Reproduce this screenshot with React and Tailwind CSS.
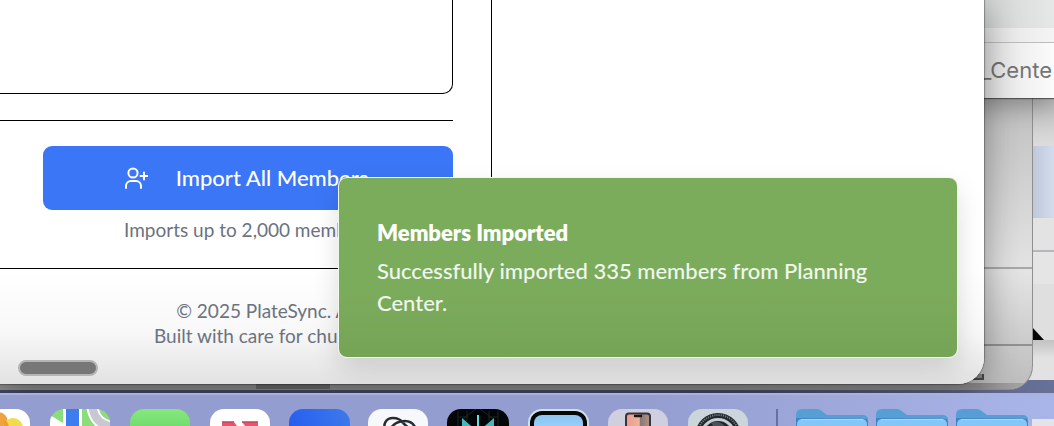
import React from "react";

const lato = "font-['Lato','Noto_Sans',sans-serif]";

function UserPlus() {
  return (
    <svg className="h-6 w-6 shrink-0" viewBox="0 0 24 24" fill="none" stroke="currentColor" strokeWidth="2" strokeLinecap="round" strokeLinejoin="round" aria-hidden="true">
      <path d="M17 22v-2a5 5 0 0 0-5-5H7a5 5 0 0 0-5 5v2" />
      <circle cx="9" cy="7" r="4.6" />
      <path d="M20 6.500v7M16.500 10h7" />
    </svg>
  );
}

function Toast() {
  return (
    <div role="status" className="absolute right-[26px] bottom-[26px] flex w-[620px] flex-col rounded-[9px] border border-[#f2f7ee] bg-linear-to-b from-[#7bac5b] from-60% to-[#76a457] px-[38px] pt-[39px] pb-[38px] text-white shadow-[0_12px_26px_rgba(0,0,0,0.13)]">
      <h2 className="text-[22px] leading-8 font-extrabold">Members Imported</h2>
      <p className="mt-[6px] text-[22px] leading-8 font-medium text-white/90">
        Successfully imported 335 members from Planning Center.
      </p>
    </div>
  );
}

function BrowserWindow() {
  return (
    <section className="absolute top-0 right-[70px] bottom-[42px] left-0 flex flex-col overflow-hidden rounded-br-[26px] bg-white shadow-[0_0_1px_1px_rgba(0,0,0,0.3),0_8px_36px_rgba(0,0,0,0.38)]">
      <main className="flex h-[269px] shrink-0">
        <div className="w-[492px] shrink-0 border-r border-b border-black pr-[38px]">
          <div className="h-[94px] rounded-br-[10px] border-r border-b border-black" />
          <hr className="mt-[26px] border-t border-black" />
          <div className="mt-[25px] pl-[43px]">
            <button type="button" className="flex h-16 w-full items-center justify-center gap-7 rounded-[9px] bg-[#3b76f6] pr-1 text-[22px] font-medium text-white">
              <UserPlus />
              <span className="pb-[2px]">Import All Members</span>
            </button>
            <p className="mt-2 text-center text-[19px] leading-6 text-[#6b7280]">Imports up to 2,000 members</p>
          </div>
        </div>
        <div className="flex-1" />
      </main>
      <footer className="flex flex-1 flex-col justify-between bg-linear-to-b from-white via-[#f8f8f8] via-55% to-[#e2e2e2]">
        <div className="ml-[154px] w-fit pt-[29px] text-center text-[19px] leading-[25px] text-[#6b7280]">
          <p>© 2025 PlateSync. All rights reserved.</p>
          <p>Built with care for churches and nonprofits.</p>
        </div>
        <div className="mb-2 ml-[18px] h-4 w-20 rounded-full border-2 border-[#b5b5b5] bg-[#777777]" />
      </footer>
      <Toast />
    </section>
  );
}

function BackgroundWindows() {
  return (
    <>
      <div className="absolute top-0 right-0 bottom-[46px] flex w-[60px] flex-col bg-[#e4e4e4]">
        <div className="h-[146px] bg-linear-to-b from-[#bdbdbd] from-65% to-[#dcdcdc]" />
        <div className="h-[72px] bg-linear-to-r from-[#bcc6d9] from-60% to-[#d3dcec]" />
        <div className="h-[34px] border-b-2 border-[#b7b7bb] bg-[#e3e3e3]" />
        <div className="h-8 bg-[#e5e5e5]" />
        <div className="flex h-14 items-end bg-[#dfdfdf] pl-[38px]">
          <svg className="h-[13px] w-[12px]" viewBox="0 0 12 13" aria-hidden="true"><path d="M0 0 12 13H0z" fill="#050505" /></svg>
        </div>
        <div className="flex-1 bg-linear-to-b from-[#c2c2c2] to-[#e2e2e2] to-45%" />
      </div>
      <div className="absolute top-0 right-[21px] bottom-[36px] left-0 flex flex-col overflow-hidden rounded-br-[24px] border-r border-b border-[#8f8f8f] bg-linear-to-b from-[#c0c0c0] from-25% via-[#e4e4e4] via-70% to-[#bcbcbc]">
        <div className="h-[269px] border-b-2 border-[#a9a9a9]" />
        <div className="h-[77px] border-b-2 border-[#929292]" />
        <div className="flex-1 pt-7">
          <div className="mr-[48px] h-[6px] border-r-2 border-b-2 border-[#4c4c4c] bg-[#8b8b8b]" />
        </div>
        <div className="flex h-[6px] bg-linear-to-r from-[#8e8e8e] from-95% to-[#a9a9a9]">
          <div className="ml-[256px] w-[74px] bg-[#6c6c6c]" />
        </div>
      </div>
      <div className="absolute top-0 right-0 flex h-[98px] w-[90px] flex-col bg-[#f2f2f2] shadow-[0_1px_1px_rgba(0,0,0,0.45),0_8px_24px_rgba(0,0,0,0.3)]">
        <div className="h-7 bg-linear-to-r from-[#cdd0cf] to-[#e5e8e7]" />
        <div className="h-[15px] border-b border-[#bcbcbc] bg-linear-to-r from-[#e0e0e0] to-[#f4f4f4]" />
        <div className="flex flex-1 items-center justify-end overflow-hidden bg-linear-to-r from-[#dedede] to-[#fbfbfb] pr-[2px] font-['Inter','Roboto',sans-serif] text-[22px] whitespace-nowrap text-[#747474]">
          _Cente
        </div>
      </div>
    </>
  );
}

function Tile({ children }) {
  return (
    <svg className="h-[60px] w-20 shrink-0" viewBox="0 0 80 60" aria-hidden="true">
      {children}
    </svg>
  );
}

function Folder() {
  return (
    <Tile>
      <path d="M4 8h67q5 0 5 5v49H4z" fill="#3d85c9" />
      <path d="M4 9V6q0-6 6-6h15q3 0 6 3l4 3h36q4 0 5 4z" fill="#579ed5" />
      <rect x="5" y="10" width="70" height="55" rx="5" fill="#85c6f4" />
      <path d="M9 10.500h62" stroke="#a5d9fc" />
    </Tile>
  );
}

function Dock() {
  return (
    <nav aria-label="Dock" className="absolute right-0 bottom-0 left-0 flex h-[33px] overflow-hidden border-t-2 border-[#a9b2dc] bg-linear-to-r from-[#949dcf] from-60% to-[#a9b4e8] pt-[14px]">
      <div className="-ml-10 flex shrink-0">
        <Tile>
          <rect x="10" width="60" height="60" rx="14" fill="#fff" />
          <circle cx="38" cy="13" r="10" fill="#efa23e" />
          <circle cx="53" cy="19" r="10" fill="#f2dc4b" />
          <path d="M43.500 10a10 10 0 0 1 4 14h-4z" fill="#e7a130" />
        </Tile>
        <Tile>
          <defs><clipPath id="map"><rect x="10" width="60" height="60" rx="14" /></clipPath></defs>
          <g clipPath="url(#map)">
            <rect x="10" width="60" height="60" fill="#8bdc7a" />
            <path d="M10 6 23 14v16H10z" fill="#fff" />
            <path d="M23 0h19v30H23z" fill="#fff" />
            <path d="M26 0h13v30H26z" fill="#3d7df0" />
            <path d="M52-6Q53 17 76 18" fill="none" stroke="#fff" strokeWidth="12" />
            <path d="M52-6Q53 17 76 18" fill="none" stroke="#c7c8d1" strokeWidth="8" />
          </g>
        </Tile>
        <Tile>
          <defs><linearGradient id="message" x2="0" y2="1"><stop stopColor="#87e77d" /><stop offset="1" stopColor="#3ac747" /></linearGradient></defs>
          <rect x="10" width="60" height="60" rx="14" fill="url(#message)" />
        </Tile>
        <Tile>
          <rect x="10" width="60" height="60" rx="14" fill="#fff" />
          <path d="M22 13h12l24 32H46L22 18z" fill="#e9546b" />
          <path d="M42 13h16v20z" fill="#e9546b" />
          <path d="M22 13h12M42 13h16" stroke="#c24458" strokeWidth="1.500" />
        </Tile>
        <Tile>
          <defs><linearGradient id="blue" x1="0" x2="1" y1=".4" y2="0"><stop stopColor="#255cf0" /><stop offset="1" stopColor="#3c7bea" /></linearGradient></defs>
          <rect x="9" width="61" height="60" rx="14" fill="url(#blue)" />
        </Tile>
        <Tile>
          <rect x="8" width="60" height="60" rx="14" fill="#f7f8fb" />
          <path d="M26 24C22 15 26 9 33 9c5 0 8 2 10 5M28 24c3-7 9-12 17-12 6 0 9 3 11 8M43 14l9 8" fill="none" stroke="#252c33" strokeWidth="2.500" />
        </Tile>
        <Tile>
          <rect x="7" width="62" height="60" rx="14" fill="#030606" />
          <path d="M18 2v30M58 2v30M27 2v10M49 2v10M20 12l16-12M56 12 40 0M18 8h10M48 8h10" stroke="#1b2423" fill="none" />
          <path d="M22 9l15 13v20H22zM54 9 39 22v20h15z" fill="#42b9bf" />
          <path d="M38 6v30" stroke="#60e2e6" strokeWidth="2" />
        </Tile>
        <Tile>
          <defs><linearGradient id="screen" x2="0" y2="1"><stop stopColor="#8bc5f5" /><stop offset="1" stopColor="#c4e8fb" /></linearGradient></defs>
          <rect x="8" width="61" height="60" rx="14" fill="#cfe1e6" />
          <rect x="10" y="2" width="57" height="57" rx="12" fill="#040607" />
          <rect x="14" y="6" width="49" height="49" rx="8" fill="url(#screen)" />
        </Tile>
        <Tile>
          <defs><linearGradient id="phone"><stop stopColor="#ee9a90" /><stop offset=".55" stopColor="#edb39b" /><stop offset=".6" stopColor="#8b7776" /><stop offset="1" stopColor="#b39384" /></linearGradient></defs>
          <rect x="8" width="60" height="60" rx="14" fill="#cfcfdf" />
          <rect x="26" y="4.500" width="24" height="50" rx="3" fill="url(#phone)" stroke="#33363d" strokeWidth="2" />
          <path d="M35 7h6" stroke="#17181c" strokeWidth="2.500" strokeLinecap="round" />
        </Tile>
        <Tile>
          <rect x="8" width="60" height="60" rx="14" fill="#cbd6da" />
          <circle cx="38" cy="27" r="23" fill="#20262a" />
          <circle cx="38" cy="27" r="21" fill="none" stroke="#7f898e" strokeWidth="2" strokeDasharray="1 1.200" />
          <circle cx="38" cy="27" r="16.500" fill="none" stroke="#c4cdd1" strokeWidth="3" />
          <path d="M31 14q9-4 16 6l-9 4z" fill="#4a5359" />
        </Tile>
      </div>
      <div className="mr-[14px] ml-4 h-10 w-[2px] shrink-0 bg-[#6870a0]" />
      <div className="flex shrink-0"><Folder /><Folder /><Folder /></div>
      <div className="mt-[10px] h-10 w-12 shrink-0 bg-[#e5e2e8]" />
    </nav>
  );
}

export default function App() {
  return (
    <div className={`relative h-screen w-full overflow-hidden bg-linear-to-r from-[#414966] from-70% to-[#687198] ${lato}`}>
      <BackgroundWindows />
      <BrowserWindow />
      <Dock />
    </div>
  );
}
